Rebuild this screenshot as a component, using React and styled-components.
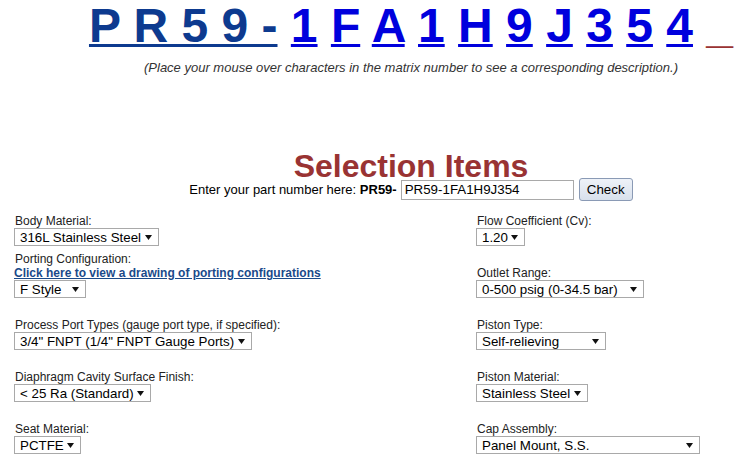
import React from 'react';
import styled, { createGlobalStyle } from 'styled-components';

const matrix = ['1', 'F', 'A', '1', 'H', '9', 'J', '3', '5', '4'];

const left = [
  {
    label: 'Body Material:',
    value: '316L Stainless Steel',
    width: 145,
  },
  {
    label: 'Porting Configuration:',
    link: 'Click here to view a drawing of porting configurations',
    value: 'F Style',
    width: 72,
  },
  {
    label: 'Process Port Types (gauge port type, if specified):',
    value: '3/4" FNPT (1/4" FNPT Gauge Ports)',
    width: 238,
  },
  {
    label: 'Diaphragm Cavity Surface Finish:',
    value: '< 25 Ra (Standard)',
    width: 137,
  },
  { label: 'Seat Material:', value: 'PCTFE', width: 67 },
];

const right = [
  { label: 'Flow Coefficient (Cv):', value: '1.20', width: 49 },
  { label: 'Outlet Range:', value: '0-500 psig (0-34.5 bar)', width: 168 },
  { label: 'Piston Type:', value: 'Self-relieving', width: 130 },
  { label: 'Piston Material:', value: 'Stainless Steel', width: 112 },
  { label: 'Cap Assembly:', value: 'Panel Mount, S.S.', width: 224 },
];

const Arrow = () => (
  <svg width="7" height="5" viewBox="0 0 7 5">
    <path d="M0 0 H7 L3.5 5 Z" fill="#111" />
  </svg>
);

const Field = ({ field }) => (
  <FieldBox>
    <Label>{field.label}</Label>
    {field.link && <DrawingLink href="#">{field.link}</DrawingLink>}
    <Select $width={field.width}>
      <span>{field.value}</span>
      <Arrow />
    </Select>
  </FieldBox>
);

export default function App() {
  return (
    <>
      <GlobalStyle />
      <Top>
        <Matrix>
          <Base href="#">P R 5 9 -</Base>{' '}
          {matrix.map((ch, i) => (
            <React.Fragment key={i}>
              <Char href="#">{ch}</Char>{' '}
            </React.Fragment>
          ))}
          <Blank>_</Blank>
        </Matrix>
        <Hint>
          (Place your mouse over characters in the matrix number to see a
          corresponding description.)
        </Hint>
        <Title>Selection Items</Title>
        <PartRow>
          <span>
            Enter your part number here: <b>PR59-</b>
          </span>
          <PartInput defaultValue="PR59-1FA1H9J354" />
          <CheckButton>Check</CheckButton>
        </PartRow>
      </Top>
      <Grid>
        {left.map((f, i) => (
          <React.Fragment key={i}>
            <Field field={f} />
            <Field field={right[i]} />
          </React.Fragment>
        ))}
      </Grid>
    </>
  );
}

const GlobalStyle = createGlobalStyle`
  html, body {
    margin: 0;
    background: #fff;
    overflow: hidden;
    font-family: "Liberation Sans", Arial, sans-serif;
    color: #000;
  }
`;

// centred on x = 411, like the original wider page
const Top = styled.div`
  width: 670px;
  margin-left: 76px;
`;

const Matrix = styled.div`
  text-align: center;
  padding-top: 2px;
  font-size: 48px;
  line-height: 48px;
  font-weight: bold;
  white-space: pre;

  a {
    text-decoration: underline;
    text-decoration-thickness: 3px;
    text-underline-offset: 2px;
  }
`;

const Base = styled.a`
  color: #0d3a8f;
`;

const Char = styled.a`
  color: #0000dd;
`;

const Blank = styled.span`
  color: #993333;
`;

const Hint = styled.div`
  margin-top: 10px;
  text-align: center;
  font-size: 13px;
  line-height: 15px;
  font-style: italic;
  color: #333;
`;

const Title = styled.h1`
  margin: 80px 0 0;
  text-align: center;
  font-size: 32px;
  line-height: 23px;
  font-weight: bold;
  color: #993333;
`;

const PartRow = styled.div`
  display: flex;
  justify-content: center;
  align-items: center;
  height: 23px;
  font-size: 13px;
  line-height: 15px;

  b {
    margin-right: 4px;
  }
`;

const PartInput = styled.input`
  box-sizing: border-box;
  width: 173px;
  height: 20px;
  margin: 0 5px 0 0;
  padding: 0 3px;
  border: 1px solid #a9a9a9;
  font-family: "Liberation Sans", Arial, sans-serif;
  font-size: 13.33px;
  color: #000;
  outline: none;
`;

const CheckButton = styled.button`
  box-sizing: border-box;
  width: 54px;
  height: 23px;
  padding: 0;
  border: 1px solid #8a9ab5;
  border-radius: 3px;
  background: linear-gradient(#eef2f8, #d8e0ec);
  font-family: "Liberation Sans", Arial, sans-serif;
  font-size: 13.33px;
  color: #000;
`;

const Grid = styled.div`
  display: grid;
  grid-template-columns: 462px 1fr;
  grid-template-rows: auto repeat(4, 52px);
  margin-top: 13px;
  padding-left: 14px;
`;

const FieldBox = styled.div`
  display: flex;
  flex-direction: column;
  justify-content: flex-end;
  align-items: flex-start;
`;

const Label = styled.div`
  font-size: 12px;
  line-height: 14px;
  color: #222;
  padding-left: 1px;
`;

const DrawingLink = styled.a`
  font-size: 12px;
  line-height: 14px;
  font-weight: bold;
  color: #1a4a8a;
  text-decoration: underline;
`;

const Select = styled.div`
  box-sizing: border-box;
  display: flex;
  align-items: center;
  justify-content: space-between;
  width: ${p => p.$width}px;
  height: 18px;
  padding: 0 6px 0 5px;
  border: 1px solid #a9a9a9;
  font-size: 13.33px;
  white-space: nowrap;
  color: #000;
`;
